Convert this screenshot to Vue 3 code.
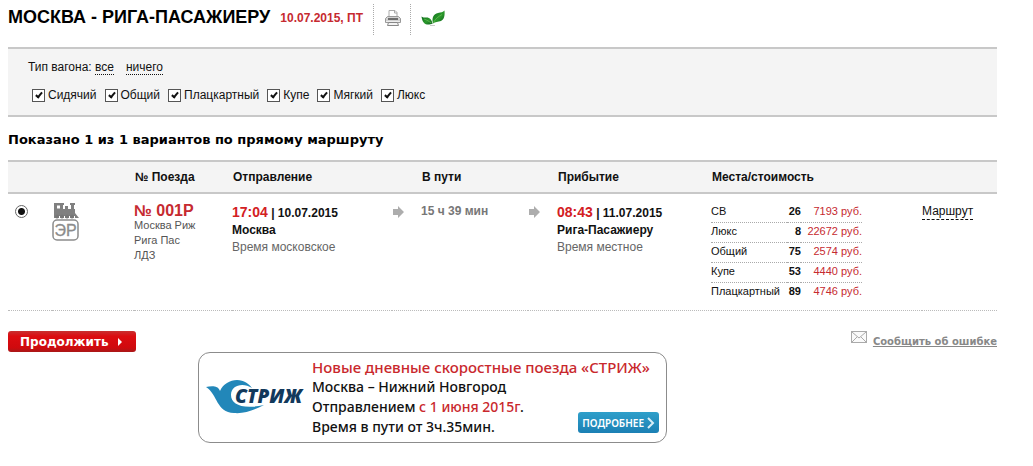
<script setup>
import { ref } from 'vue'

const carTypes = ref([
  { name: 'Сидячий', on: true },
  { name: 'Общий', on: true },
  { name: 'Плацкартный', on: true },
  { name: 'Купе', on: true },
  { name: 'Мягкий', on: true },
  { name: 'Люкс', on: true },
])
const setAll = (value) => carTypes.value.forEach((t) => (t.on = value))

const train = ref('001Р')
const seats = [
  { type: 'СВ', count: 26, price: 7193 },
  { type: 'Люкс', count: 8, price: 22672 },
  { type: 'Общий', count: 75, price: 2574 },
  { type: 'Купе', count: 53, price: 4440 },
  { type: 'Плацкартный', count: 89, price: 4746 },
]
</script>

<template>
  <main class="page">
    <header class="head">
      <h1>МОСКВА - РИГА-ПАСАЖИЕРУ</h1>
      <span class="date">10.07.2015, ПТ</span>
      <a class="tool" href="#" aria-label="Печать">
        <svg width="18" height="18" viewBox="0 0 18 18">
          <path d="M5 7.500V1.500h6L13 3.500v4z" fill="#fff" stroke="#aaa" />
          <path d="M10.500 1.500V4h2.500" fill="none" stroke="#aaa" />
          <path d="M3.500 7.500h11l2 2v4h-15v-4z" fill="#d2d2d2" stroke="#999" />
          <path d="M4 10h10" stroke="#444" stroke-width="1.400" />
          <path d="M2 12.500h14" stroke="#eee" />
          <path d="M4.500 13.500h9l1 3h-11z" fill="#f4f4f4" stroke="#888" />
        </svg>
      </a>
      <a class="tool" href="#" aria-label="Экология">
        <svg width="24" height="18" viewBox="0 0 24 18">
          <defs>
            <linearGradient id="leaf" x1="0" y1="0" x2="1" y2="1">
              <stop offset="0" stop-color="#0c6b1c" />
              <stop offset="0.55" stop-color="#2c9a2c" />
              <stop offset="1" stop-color="#0b5a1c" />
            </linearGradient>
          </defs>
          <path d="M12 14.500C10.500 9 12.500 5 17 4C20 3.500 22 3 23.500 1.500C24 7 23 10.500 20 12C17 13.200 14 12.500 12 14.500Z" fill="url(#leaf)" />
          <path d="M11.500 15C11 11 9 8.500 5.500 8.500C3 8.500 1.500 8.500 .5 7.500C1 12 3 15 6 15.500C8 15.800 10 15 11.500 15Z" fill="url(#leaf)" />
          <path d="M12.500 13.500C14.500 9.500 17.500 7.500 21 5.500M10.500 14C8 12.500 6 11 3 10" fill="none" stroke="#7cc860" stroke-width=".6" />
          <path d="M9 16.500h5" stroke="#ccc" />
        </svg>
      </a>
    </header>

    <section class="filter">
      <p class="filter-line">
        Тип вагона:
        <button type="button" class="pick" @click="setAll(true)">все</button>
        <button type="button" class="pick" @click="setAll(false)">ничего</button>
      </p>
      <div class="types">
        <label v-for="t in carTypes" :key="t.name" class="type">
          <input v-model="t.on" type="checkbox" class="check" />{{ t.name }}
        </label>
      </div>
    </section>

    <h2>Показано 1 из 1 вариантов по прямому маршруту</h2>

    <table class="trains">
      <colgroup>
        <col class="c-radio" /><col class="c-icon" /><col class="c-train" /><col class="c-dep" />
        <col class="c-arrow" /><col class="c-time" /><col class="c-arrow" /><col class="c-arr" />
        <col class="c-seats" /><col />
      </colgroup>
      <thead>
        <tr>
          <th></th>
          <th></th>
          <th>№ Поезда</th>
          <th>Отправление</th>
          <th></th>
          <th>В пути</th>
          <th></th>
          <th>Прибытие</th>
          <th>Места/стоимость</th>
          <th></th>
        </tr>
      </thead>
      <tbody>
        <tr>
          <td>
            <input v-model="train" type="radio" name="train" value="001Р" class="radio" aria-label="Поезд 001Р" />
          </td>
          <td class="icon-cell">
            <svg width="28" height="40" viewBox="0 0 28 40">
              <path d="M2 0h10v2h-1v4h2V3h3v3h3V2h-1V0h5v2h-1v4h1v4l4 5H2z" fill="#808080" />
              <path d="M5 2.500h3v3H5z" fill="#fff" />
              <circle cx="5" cy="13.500" r="2" fill="#777" />
              <circle cx="10" cy="13.500" r="2" fill="#777" />
              <circle cx="15" cy="13.500" r="2" fill="#777" />
              <circle cx="20" cy="13.500" r="2" fill="#777" />
              <path d="M7.500 13v2M12.500 13v2M17.500 13v2M22.500 13v2" stroke="#fff" />
              <rect x="1" y="17" width="25" height="20" rx="4" fill="#fff" stroke="#8c8c8c" stroke-width="1.500" />
              <text x="13.500" y="33" text-anchor="middle" class="er">ЭР</text>
            </svg>
          </td>
          <td class="train-cell">
            <strong class="number">№ 001Р</strong>
            <span>Москва Риж</span>
            <span>Рига Пас</span>
            <span>ЛДЗ</span>
          </td>
          <td class="stop">
            <b><span class="clock">17:04</span> | 10.07.2015</b>
            <b>Москва</b>
            <span>Время московское</span>
          </td>
          <td class="arrow-cell">
            <svg width="12" height="12" viewBox="0 0 12 12"><path d="M0 3h5V0l6 6-6 6V9H0z" fill="#adadad" /></svg>
          </td>
          <td class="duration">15 ч 39 мин</td>
          <td class="arrow-cell">
            <svg width="12" height="12" viewBox="0 0 12 12"><path d="M0 3h5V0l6 6-6 6V9H0z" fill="#adadad" /></svg>
          </td>
          <td class="stop">
            <b><span class="clock">08:43</span> | 11.07.2015</b>
            <b>Рига-Пасажиеру</b>
            <span>Время местное</span>
          </td>
          <td>
            <table class="seats">
              <tbody>
                <tr v-for="s in seats" :key="s.type">
                  <td>{{ s.type }}</td>
                  <td class="count">{{ s.count }}</td>
                  <td class="price">{{ s.price }} руб.</td>
                </tr>
              </tbody>
            </table>
          </td>
          <td><a href="#" class="route">Маршрут</a></td>
        </tr>
      </tbody>
    </table>

    <div class="actions">
      <button type="button" class="go">
        Продолжить
        <svg width="5" height="8" viewBox="0 0 5 8"><path d="M0 0l4 4-4 4z" fill="#fff" /></svg>
      </button>
      <a href="#" class="report">
        <svg width="17" height="13" viewBox="0 0 17 13">
          <rect x=".5" y=".5" width="15" height="11" fill="#fafafa" stroke="#aaa" />
          <path d="M1 1l7 6 7-6M1 11l5-5M15 11l-5-5" fill="none" stroke="#aaa" />
        </svg>
        <span>Сообщить об ошибке</span>
      </a>
    </div>

    <aside class="banner">
      <svg class="logo" width="98" height="36" viewBox="0 0 98 36">
        <path d="M0 8C5 7 12 6 14 12C17 5 24 1 31 1C38 1 43 5 46 9C37 3 25 6 25 16C25 25 36 31 58 26C48 31 38 35 28 34C10 33 12 16 0 8Z" fill="#2287b9" />
        <text x="29" y="24" class="logo-text">СТРИЖ</text>
      </svg>
      <div class="promo">
        <p class="promo-title">Новые дневные скоростные поезда «СТРИЖ»</p>
        <p>Москва – Нижний Новгород</p>
        <p>Отправлением <span class="red">с 1 июня 2015г</span>.</p>
        <p>Время в пути от 3ч.35мин.</p>
      </div>
      <button type="button" class="more">
        ПОДРОБНЕЕ
        <svg width="8" height="12" viewBox="0 0 8 12"><path d="M1 1l5 5-5 5" fill="none" stroke="#d8eef8" stroke-width="2" /></svg>
      </button>
    </aside>
  </main>
</template>

<style>
body {
  background: #fff;
}
</style>

<style scoped>
.page {
  padding: 4px 36px 24px 8px;
  font: 12px/16px "Liberation Sans", Arial, sans-serif;
  color: #111;
}
h1, h2, p {
  margin: 0;
}
button {
  font: inherit;
  color: inherit;
  border: 0;
  background: none;
  padding: 0;
  cursor: pointer;
}
.head {
  display: flex;
  align-items: center;
  height: 31px;
}
h1 {
  font-size: 18px;
  line-height: 24px;
  margin-bottom: 6px;
  color: #000;
}
.date {
  margin: 0 10px 4px;
  font-weight: bold;
  color: #c62a30;
}
.tool {
  display: flex;
  align-items: center;
  height: 31px;
  padding: 0 8px 0 10px;
  border-left: 1px dotted #aaa;
}
.tool svg {
  margin-bottom: 4px;
}
.filter {
  margin-top: 12px;
  padding: 10px 20px 12px;
  border-top: 2px solid #c8c8c8;
  border-bottom: 2px solid #c8c8c8;
  background: #f4f4f4;
}
.filter-line {
  line-height: 17px;
}
.pick {
  margin-right: 12px;
  line-height: 14px;
  border-bottom: 1px dotted #111;
}
.types {
  display: flex;
  gap: 8px;
  margin: 11px 0 0 4px;
}
.type {
  display: flex;
  align-items: center;
  gap: 3px;
}
.check {
  appearance: none;
  box-sizing: border-box;
  position: relative;
  width: 13px;
  height: 13px;
  margin: 1px 0 0;
  border: 1px solid #555;
  background: #fff;
}
.check:checked::after {
  content: "";
  position: absolute;
  left: 4px;
  top: 1px;
  width: 2px;
  height: 5px;
  border: solid #111;
  border-width: 0 2px 2px 0;
  transform: rotate(40deg);
}
h2 {
  margin: 14px 0 12px;
  font: bold 13px/17px Verdana, "DejaVu Sans", sans-serif;
  color: #000;
}
table {
  border-collapse: separate;
  border-spacing: 0;
  width: 100%;
}
td, th {
  padding: 0;
  text-align: left;
  vertical-align: top;
}
.trains {
  table-layout: fixed;
}
.c-radio { width: 44px; }
.c-icon { width: 82px; }
.c-train { width: 98px; }
.c-dep { width: 160px; }
.c-arrow { width: 29px; }
.c-time { width: 107px; }
.c-arr { width: 154px; }
.c-seats { width: 211px; }
.trains th {
  padding: 7px 0 7px 1px;
  border-top: 2px solid #c8c8c8;
  border-bottom: 2px solid #c8c8c8;
  background: #f4f4f4;
}
.trains > tbody > tr > td {
  padding-top: 9px;
  padding-bottom: 6px;
  border-bottom: 1px dotted #bbb;
}
.trains > tbody > tr > .stop {
  padding-top: 10px;
}
.radio {
  appearance: none;
  display: block;
  box-sizing: border-box;
  width: 13px;
  height: 13px;
  margin: 2px 0 0 7px;
  border: 1px solid #666;
  border-radius: 50%;
}
.radio:checked {
  background: radial-gradient(circle, #111 0 3px, #fff 4px);
}
.icon-cell svg {
  display: block;
}
.er {
  font: 16px "Liberation Sans", Arial, sans-serif;
  fill: #8c8c8c;
  stroke: #8c8c8c;
  stroke-width: .3px;
}
.train-cell > *, .stop > * {
  display: block;
}
.train-cell {
  font-size: 11px;
  line-height: 15px;
  color: #555;
}
.number {
  font-size: 16px;
  color: #c62a30;
}
.stop {
  line-height: 17px;
  color: #666;
}
.stop b {
  color: #111;
}
.stop .clock {
  font-size: 14px;
  color: #d3201f;
}
.arrow-cell svg {
  display: block;
  margin: 3px 0 0 1px;
}
.duration {
  font-weight: bold;
  color: #777;
}
.seats {
  width: 151px;
  font-size: 11px;
}
.seats td {
  padding: 1px 0 3px;
  line-height: 15px;
  border-bottom: 1px dotted #aaa;
}
.seats tr:last-child td {
  padding-bottom: 5px;
  border-bottom: 0;
}
.seats .count {
  text-align: right;
  font-weight: bold;
}
.seats .price {
  width: 61px;
  text-align: right;
  color: #c62a30;
}
.route {
  display: inline-block;
  color: #111;
  text-decoration: none;
  border-bottom: 1px dashed #111;
}
.actions {
  display: flex;
  justify-content: space-between;
  align-items: flex-start;
  margin-top: 20px;
}
.go {
  display: flex;
  align-items: center;
  gap: 9px;
  height: 21px;
  padding: 0 13px 0 12px;
  border-radius: 3px;
  background: linear-gradient(#c83030, #dc0c10 25%, #cf0a0e 80%, #a81818);
  color: #fff;
  font: bold 12px/20px Verdana, "DejaVu Sans", sans-serif;
}
.report {
  display: flex;
  gap: 5px;
  color: #888;
  font: bold 10px/21px Verdana, "DejaVu Sans", sans-serif;
}
.banner {
  display: flex;
  align-items: flex-end;
  box-sizing: border-box;
  width: 469px;
  max-width: 100%;
  margin-left: 190px;
  padding: 4px 7px 5px;
  border: 1px solid #8c8c8c;
  border-radius: 12px;
  background: #fff;
}
.logo {
  flex: none;
  align-self: center;
}
.logo-text {
  font: italic 800 19px "Open Sans", sans-serif;
  fill: #12395c;
}
.promo {
  flex: 1;
  min-width: 0;
  margin-left: 8px;
  font: 500 14px/20px "Noto Sans", sans-serif;
  white-space: nowrap;
  color: #111;
}
.promo-title, .red {
  color: #c9282d;
}
.promo-title {
  font-size: 15px;
}
.more {
  display: flex;
  flex: none;
  align-items: center;
  gap: 3px;
  height: 21px;
  margin-bottom: 4px;
  padding: 0 4px;
  border-radius: 3px;
  background: linear-gradient(#2f9fca, #1b80b4);
  color: #fff;
  font: 600 10px/20px "Noto Sans", sans-serif;
}
</style>
